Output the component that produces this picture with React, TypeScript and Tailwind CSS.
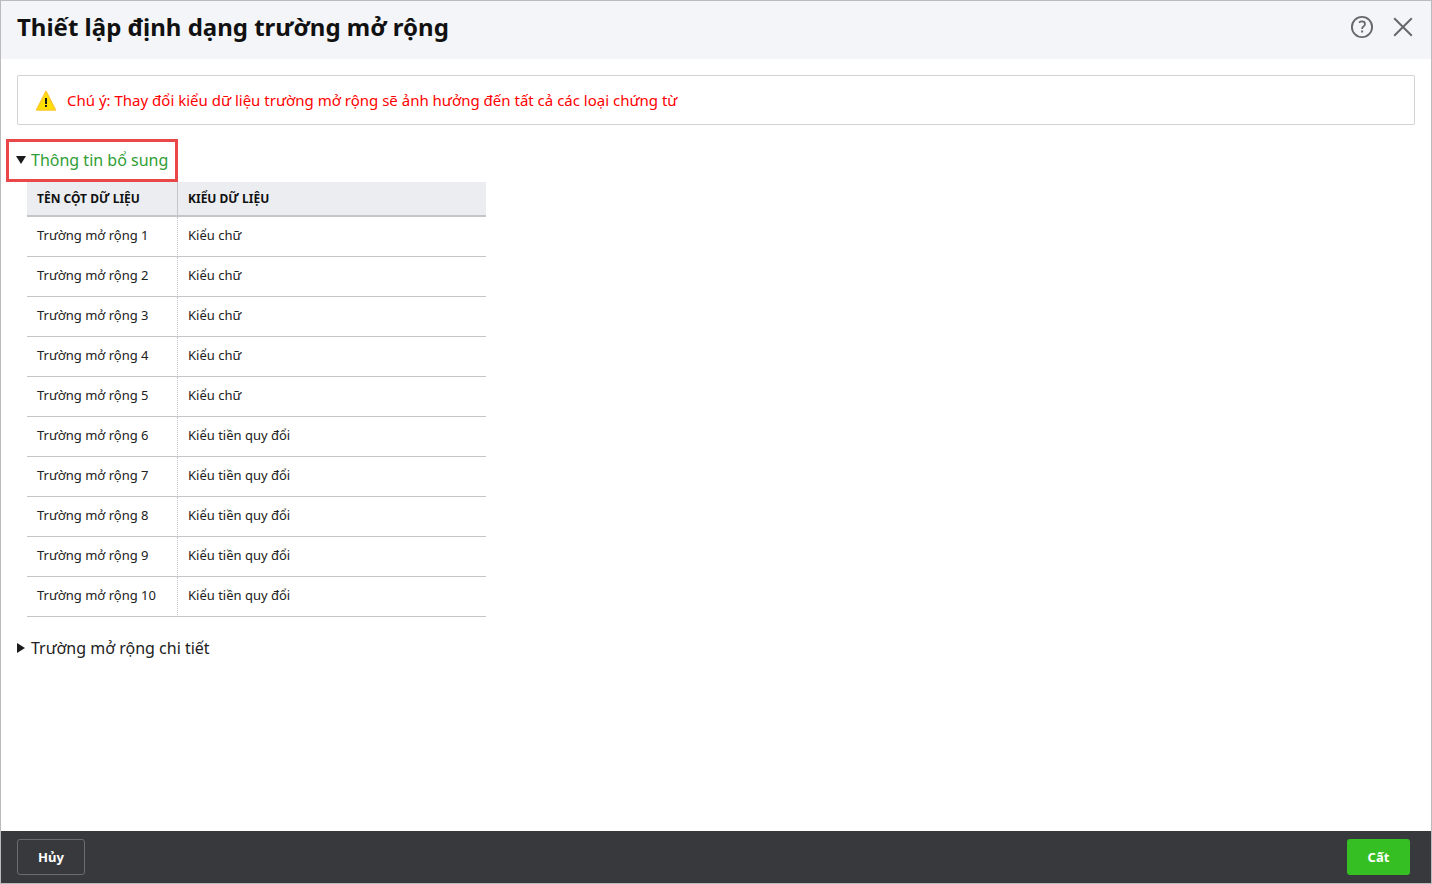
import React, { useState } from "react";

interface ExtendField {
  name: string;
  type: string;
}

interface FieldSectionProps {
  title: string;
  fields: ExtendField[];
  open: boolean;
  highlighted?: boolean;
  onToggle: () => void;
}

const createFields = (prefix: string): ExtendField[] =>
  Array.from({ length: 10 }, (_, index) => ({
    name: `${prefix} ${index + 1}`,
    type: index < 5 ? "Kiểu chữ" : "Kiểu tiền quy đổi",
  }));

const generalFields = createFields("Trường mở rộng");
const detailFields = createFields("Trường mở rộng chi tiết");

const HelpIcon: React.FC = () => (
  <svg width="24" height="24" viewBox="0 0 24 24" fill="none" stroke="#65686c">
    <circle cx="12" cy="12" r="10.1" strokeWidth="1.9" />
    <path
      d="M9 7.6C9.8 6.8 10.8 6.4 12 6.4c1.9 0 3 .9 3 2.5 0 1.2-.7 1.9-1.6 2.6-1 .7-1.3 1.2-1.3 2.4"
      strokeWidth="1.7"
    />
    <path d="M12.1 15.5v2" strokeWidth="2" />
  </svg>
);

const CloseIcon: React.FC = () => (
  <svg width="24" height="24" viewBox="0 0 24 24" fill="none" stroke="#65686c">
    <path d="M3.2 3.2l17.6 17.6M20.8 3.2L3.2 20.8" strokeWidth="2" />
  </svg>
);

const WarningIcon: React.FC = () => (
  <svg width="22" height="24" viewBox="0 0 22 24">
    <path
      d="M11 3.4L20.4 22H1.6z"
      fill="#ffe000"
      stroke="#fdc92b"
      strokeWidth="1.6"
      strokeLinejoin="round"
    />
    <path d="M10 10h2v6h-2zM10 17h2v2h-2z" fill="#1a1a1a" />
  </svg>
);

const FieldSection: React.FC<FieldSectionProps> = ({
  title,
  fields,
  open,
  highlighted,
  onToggle,
}) => {
  return (
    <section>
      <button
        type="button"
        aria-expanded={open}
        onClick={onToggle}
        className={`flex h-[43px] items-center gap-1 border-3 px-[7px] pb-0.5 text-base ${
          highlighted ? "border-[#ea4848]" : "border-transparent"
        } ${open ? "text-[#2f9e35]" : "text-[#212121]"}`}
      >
        <svg width="11" height="10" viewBox="0 0 11 10" fill="#1b1b1b">
          <path d={open ? "M0 1h10L5 9z" : "M1 0v10l8-5z"} />
        </svg>
        {title}
      </button>
      {open && (
        <table className="ml-[21px] w-[459px] table-fixed border-separate border-spacing-0 text-left text-[13px]">
          <thead>
            <tr className="h-[35px] bg-[#ebedf1] text-xs">
              <th className="w-[151px] border-r border-b-2 border-[#c4c5c8] px-2.5 font-bold text-[#111]">
                TÊN CỘT DỮ LIỆU
              </th>
              <th className="border-b-2 border-[#c4c5c8] px-2.5 font-bold text-[#111]">
                KIỂU DỮ LIỆU
              </th>
            </tr>
          </thead>
          <tbody className="text-[#212121]">
            {fields.map((field) => (
              <tr key={field.name} className="h-10">
                <td className="border-r border-b border-[#c4c5c8] px-2.5 pb-0.5 [border-right-style:dotted]">
                  {field.name}
                </td>
                <td className="border-b border-[#c4c5c8] px-2.5 pb-0.5">
                  {field.type}
                </td>
              </tr>
            ))}
          </tbody>
        </table>
      )}
    </section>
  );
};

const App: React.FC = () => {
  const [generalOpen, setGeneralOpen] = useState(true);
  const [detailOpen, setDetailOpen] = useState(false);

  return (
    <div className="flex min-h-screen flex-col border border-[#bbbbbb] bg-white font-['Noto_Sans',sans-serif] text-[#111]">
      {/* Header */}
      <header className="flex h-[58px] items-center justify-between bg-[#f4f5f8] px-4 pb-1.5">
        <h1 className="text-2xl font-bold">Thiết lập định dạng trường mở rộng</h1>
        <div className="flex items-center gap-[17px]">
          <button type="button" aria-label="Trợ giúp">
            <HelpIcon />
          </button>
          <button type="button" aria-label="Đóng">
            <CloseIcon />
          </button>
        </div>
      </header>

      <main className="grow pt-4">
        {/* Notice */}
        <div className="mx-4 flex h-[50px] items-center gap-2.5 rounded-xs border border-[#d2d3d6] px-[17px] text-[15px] text-[#ff0000]">
          <WarningIcon />
          <p>
            Chú ý: Thay đổi kiểu dữ liệu trường mở rộng sẽ ảnh hưởng đến tất cả
            các loại chứng từ
          </p>
        </div>

        {/* Field groups */}
        <div className="mt-3.5 flex flex-col gap-2.5 pl-[5px]">
          <FieldSection
            title="Thông tin bổ sung"
            fields={generalFields}
            open={generalOpen}
            highlighted
            onToggle={() => setGeneralOpen(!generalOpen)}
          />
          <FieldSection
            title="Trường mở rộng chi tiết"
            fields={detailFields}
            open={detailOpen}
            onToggle={() => setDetailOpen(!detailOpen)}
          />
        </div>
      </main>

      {/* Actions */}
      <footer className="flex h-[52px] items-center justify-between bg-[#38393d] pr-[21px] pl-4 text-[13px] font-bold text-white">
        <button
          type="button"
          className="h-9 min-w-16 rounded-[3px] border border-[#6b6c70] px-5 pt-0.5"
        >
          Hủy
        </button>
        <button
          type="button"
          className="h-9 min-w-[63px] rounded-[3px] bg-[#35bf22] px-5 pt-0.5"
        >
          Cất
        </button>
      </footer>
    </div>
  );
};

export default App;
